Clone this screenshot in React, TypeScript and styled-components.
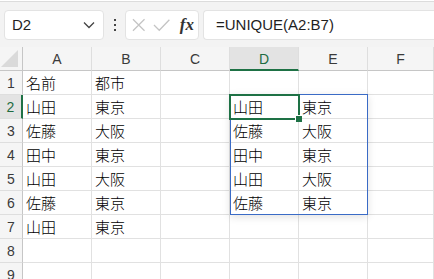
import React from 'react';
import styled, { createGlobalStyle } from 'styled-components';

const GlobalStyle = createGlobalStyle`
    html, body {
        margin: 0;
        padding: 0;
        background: #ffffff;
        overflow: hidden;
    }
    body {
        width: 434px;
        height: 279px;
        font-family: 'Liberation Sans', 'Noto Sans CJK JP', sans-serif;
    }
`;

const COL_LETTERS = ['A', 'B', 'C', 'D', 'E', 'F'];
const ROW_COUNT = 9;

// sheet contents, keyed by row (1-based) then column letter
const data: Record<number, Record<string, string>> = {
    1: { A: '名前', B: '都市' },
    2: { A: '山田', B: '東京', D: '山田', E: '東京' },
    3: { A: '佐藤', B: '大阪', D: '佐藤', E: '大阪' },
    4: { A: '田中', B: '東京', D: '田中', E: '東京' },
    5: { A: '山田', B: '大阪', D: '山田', E: '大阪' },
    6: { A: '佐藤', B: '東京', D: '佐藤', E: '東京' },
    7: { A: '山田', B: '東京' },
};

const ACTIVE_COL = 'D';
const ACTIVE_ROW = 2;

const App = () => {
    return (
        <Window>
            <GlobalStyle />
            <TopStrip />
            <FormulaBar>
                <NameBox>
                    <span>D2</span>
                    <svg width='12' height='8' viewBox='0 0 12 8'>
                        <path d='M1 1.5 L6 6.5 L11 1.5' fill='none' stroke='#444' strokeWidth='1.3' />
                    </svg>
                </NameBox>
                <Dots>
                    <i />
                    <i />
                    <i />
                </Dots>
                <FxBox>
                    <svg width='14' height='14' viewBox='0 0 14 14'>
                        <path d='M1 1 L13 13 M13 1 L1 13' stroke='#c4c4c4' strokeWidth='1.3' />
                    </svg>
                    <svg width='18' height='14' viewBox='0 0 18 14'>
                        <path d='M1 7 L6.5 12.5 L17 1.5' fill='none' stroke='#c4c4c4' strokeWidth='1.3' />
                    </svg>
                    <Fx>fx</Fx>
                </FxBox>
                <FormulaInput>=UNIQUE(A2:B7)</FormulaInput>
            </FormulaBar>
            <Sheet>
                <Corner $r={1} $c={1}>
                    <svg width='18' height='17' viewBox='0 0 18 17'>
                        <path d='M17 0 L17 17 L0 17 Z' fill='#dadada' />
                    </svg>
                </Corner>
                {COL_LETTERS.map((col, i) => (
                    <ColHead key={col} $r={1} $c={i + 2} $active={col === ACTIVE_COL}>
                        {col}
                    </ColHead>
                ))}
                {Array.from({ length: ROW_COUNT }, (_, r) => {
                    const row = r + 1;
                    return (
                        <React.Fragment key={row}>
                            <RowHead $r={row + 1} $c={1} $active={row === ACTIVE_ROW}>
                                {row}
                            </RowHead>
                            {COL_LETTERS.map((col, i) => (
                                <Cell key={col} $r={row + 1} $c={i + 2}>
                                    {data[row]?.[col] ?? ''}
                                </Cell>
                            ))}
                        </React.Fragment>
                    );
                })}
                <SpillRange $r={3} $c={5} $rowSpan={5} $colSpan={2} />
                <Selection $r={3} $c={5} $rowSpan={1} $colSpan={1}>
                    <Handle />
                </Selection>
            </Sheet>
        </Window>
    );
};

type Pos = { $r: number; $c: number };
type Span = Pos & { $rowSpan: number; $colSpan: number };

const Window = styled.div`
    width: 434px;
    height: 279px;
    overflow: hidden;
    background: #ffffff;
`;

const TopStrip = styled.div`
    height: 1px;
    background: #ffffff;
    border-bottom: 1px solid #dcdcdc;
`;

const FormulaBar = styled.div`
    height: 45px;
    background: #f3f3f3;
    display: flex;
    align-items: center;
    padding-left: 4px;
    box-sizing: border-box;
`;

const Box = styled.div`
    height: 30px;
    box-sizing: border-box;
    background: #ffffff;
    border: 1px solid #e3e3e3;
    border-radius: 4px;
    display: flex;
    align-items: center;
`;

const NameBox = styled(Box)`
    width: 100px;
    padding: 0 8px 0 7px;
    justify-content: space-between;
    font-size: 15px;
    color: #1f1f1f;
`;

const Dots = styled.div`
    width: 21px;
    display: flex;
    flex-direction: column;
    align-items: center;
    gap: 3px;
    i {
        width: 2px;
        height: 2px;
        background: #444;
    }
`;

const FxBox = styled(Box)`
    width: 74px;
    padding: 0 4px 0 6px;
    gap: 8px;
`;

const Fx = styled.span`
    font-family: 'Liberation Serif', serif;
    font-style: italic;
    font-weight: bold;
    font-size: 17px;
    color: #333;
    margin-left: 1px;
`;

const FormulaInput = styled(Box)`
    flex: 1;
    margin-left: 4px;
    border-right: none;
    border-radius: 4px 0 0 4px;
    padding-left: 12px;
    font-size: 15px;
    color: #1f1f1f;
`;

const Sheet = styled.div`
    display: grid;
    grid-template-columns: 23px repeat(5, 69px) 1fr;
    grid-template-rows: 24px repeat(${ROW_COUNT}, 24px);
`;

const GridItem = styled.div<Pos>`
    grid-row: ${(p) => p.$r};
    grid-column: ${(p) => p.$c};
    box-sizing: border-box;
    min-width: 0;
`;

const Corner = styled(GridItem)`
    background: #f5f5f5;
    border-right: 1px solid #c6c6c6;
    border-bottom: 1px solid #c6c6c6;
    display: flex;
    align-items: flex-end;
    justify-content: flex-end;
    padding: 0 3px 3px 0;
`;

const ColHead = styled(GridItem)<{ $active: boolean }>`
    background: ${(p) => (p.$active ? '#e3e3e3' : '#f5f5f5')};
    border-right: 1px solid #dedede;
    border-bottom: ${(p) => (p.$active ? '2px solid #1e7145' : '1px solid #c6c6c6')};
    display: flex;
    align-items: center;
    justify-content: center;
    font-size: 14px;
    color: ${(p) => (p.$active ? '#1e6b41' : '#3a3a3a')};
    padding-top: ${(p) => (p.$active ? '1px' : '0')};
`;

const RowHead = styled(GridItem)<{ $active: boolean }>`
    background: ${(p) => (p.$active ? '#e3e3e3' : '#f5f5f5')};
    border-right: ${(p) => (p.$active ? '2px solid #1e7145' : '1px solid #c6c6c6')};
    border-bottom: 1px solid #dedede;
    display: flex;
    align-items: center;
    justify-content: center;
    font-size: 14px;
    color: ${(p) => (p.$active ? '#1e6b41' : '#3a3a3a')};
`;

const Cell = styled(GridItem)`
    border-right: 1px solid #e1e1e1;
    border-bottom: 1px solid #e1e1e1;
    display: flex;
    align-items: center;
    padding-left: 3px;
    font-family: 'Noto Sans CJK JP', sans-serif;
    font-weight: 300;
    font-size: 15px;
    color: #000000;
    white-space: nowrap;
    overflow: hidden;
`;

const Spanning = styled.div<Span>`
    grid-row: ${(p) => `${p.$r} / span ${p.$rowSpan}`};
    grid-column: ${(p) => `${p.$c} / span ${p.$colSpan}`};
    box-sizing: border-box;
    pointer-events: none;
    position: relative;
`;

const SpillRange = styled(Spanning)`
    margin: -1px 0 0 0;
    border: 1px solid #3a6bc6;
    box-shadow: 0 2px 8px rgba(0, 0, 0, 0.12);
    z-index: 1;
`;

const Selection = styled(Spanning)`
    margin: -1px -1px -1px -1px;
    border: 2px solid #1e7145;
    z-index: 2;
`;

const Handle = styled.div`
    position: absolute;
    right: -4px;
    bottom: -4px;
    width: 6px;
    height: 6px;
    background: #1e7145;
    border: 1px solid #ffffff;
    border-right: none;
    border-bottom: none;
`;

export default App;
